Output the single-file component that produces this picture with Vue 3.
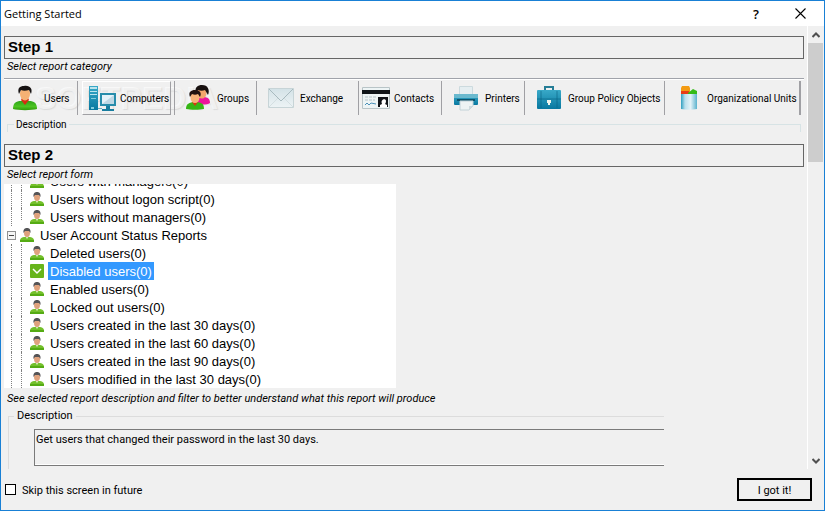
<script setup>
import { ref } from 'vue'

const categories = [
  { name: 'Users', icon: 'user', size: 'w-users' },
  { name: 'Computers', icon: 'computer', size: 'w-computers' },
  { name: 'Groups', icon: 'group', size: 'w-groups' },
  { name: 'Exchange', icon: 'mail', size: 'w-exchange' },
  { name: 'Contacts', icon: 'card', size: 'w-contacts' },
  { name: 'Printers', icon: 'printer', size: 'w-printers' },
  { name: 'Group Policy Objects', icon: 'case', size: 'w-policy' },
  { name: 'Organizational Units', icon: 'folder', size: 'w-units' },
]
const activeCategory = ref('Computers')

const reports = [
  { name: 'Users with managers(0)' },
  { name: 'Users without logon script(0)' },
  { name: 'Users without managers(0)', last: true },
  { name: 'User Account Status Reports', group: true },
  { name: 'Deleted users(0)' },
  { name: 'Disabled users(0)' },
  { name: 'Enabled users(0)' },
  { name: 'Locked out users(0)' },
  { name: 'Users created in the last 30 days(0)' },
  { name: 'Users created in the last 60 days(0)' },
  { name: 'Users created in the last 90 days(0)' },
  { name: 'Users modified in the last 30 days(0)' },
]
const selected = ref('Disabled users(0)')
const skip = ref(false)
</script>

<template>
  <div class="window">
    <svg class="defs" width="0" height="0" aria-hidden="true">
      <defs>
        <linearGradient id="green" x1="0" y1="0" x2="0" y2="1"><stop offset="0" stop-color="#2fa51a" /><stop offset=".6" stop-color="#4cc422" /><stop offset="1" stop-color="#2f9a08" /></linearGradient>
        <linearGradient id="teal" x1="0" y1="0" x2="0" y2="1"><stop offset="0" stop-color="#39a9c8" /><stop offset="1" stop-color="#0878a0" /></linearGradient>
        <linearGradient id="glass" x1="0" y1="0" x2="1" y2="0"><stop offset="0" stop-color="#2e9fc0" /><stop offset=".25" stop-color="#b9dfec" /><stop offset=".6" stop-color="#e4f3f8" /><stop offset="1" stop-color="#5bb2cd" /></linearGradient>
        <linearGradient id="paper" x1="0" y1="0" x2="0" y2="1"><stop offset="0" stop-color="#d3e2e7" /><stop offset="1" stop-color="#edf3f5" /></linearGradient>
      </defs>
    </svg>
    <header class="titlebar">
      <h1>Getting Started</h1>
      <button class="help" aria-label="Help">?</button>
      <button class="close" aria-label="Close">
        <svg width="11" height="11" viewBox="0 0 11 11"><path d="M.5 .5l10 10M10.5 .5l-10 10" stroke="#000" stroke-width="1.1" /></svg>
      </button>
    </header>

    <div class="body">
      <main class="content">
        <h2>Step 1</h2>
        <p class="hint">Select report category</p>
        <div class="toolbar">
          <span class="watermark" aria-hidden="true">SOFTPEDIA</span>
          <button
            v-for="c in categories"
            :key="c.name"
            class="category"
            :class="[c.size, { active: activeCategory === c.name }]"
            @click="activeCategory = c.name"
          >
            <svg v-if="c.icon === 'user'" width="26" height="26" viewBox="0 0 26 26">
              <path d="M1 24c0-6 3-8 8-8h8c5 0 8 2 8 8-5 1.500-19 1.500-24 0z" fill="url(#green)" />
              <path d="M9 15l4 5 4-5-1-2h-6z" fill="#d52d12" />
              <ellipse cx="13" cy="9" rx="5" ry="6.500" fill="#f5b174" />
              <path d="M7 9C5 3 8 1 12 1c6-1 9 3 7 8l-2-4c-3 1-6 1-8 0z" fill="#171313" />
            </svg>
            <svg v-else-if="c.icon === 'computer'" width="28" height="27" viewBox="0 0 28 27">
              <path d="M1 1h9v24H1z" fill="url(#teal)" /><path d="M2 2h7v2H2zm0 4h7v1H2zm0 3h7v1H2z" fill="#bce4ed" />
              <path d="M3 13h5v1H3zm0 9h3v2H3z" fill="#83cddd" />
              <path d="M12 8h16v13H12z" fill="#278cab" /><path d="M14 10h12v9H14z" fill="#e4f2f9" /><path d="M14 19l12-9v9z" fill="#bed7e4" />
              <path d="M18 21h4v3h4v2H14v-2h4z" fill="#187d9f" /><path d="M10 23h4v1h-4z" fill="#63aec3" />
            </svg>
            <svg v-else-if="c.icon === 'group'" width="26" height="26" viewBox="0 0 26 26">
              <path d="M11 18c0-4 3-6 7-6 5 0 7 2 7 6-3 2-11 2-14 0z" fill="#ed169c" />
              <ellipse cx="17" cy="8" rx="4.500" ry="5.500" fill="#f3a66c" /><path d="M11 9C9 2 13 0 17 0c6 0 8 5 6 10l-3-5c-2 1-5 1-7 0z" fill="#17100f" />
              <path d="M1 24c0-5 3-7 9-7 7 0 9 2 9 7-5 1-13 1-18 0z" fill="#37b615" /><path d="M7 17l3 4 3-4z" fill="#d63814" />
              <ellipse cx="10" cy="12.500" rx="4.500" ry="5.500" fill="#f7b57a" /><path d="M5 12C3 7 6 5 10 5c5 0 7 3 5 7l-2-3c-2 1-4 1-6 0z" fill="#211411" />
            </svg>
            <svg v-else-if="c.icon === 'mail'" width="26" height="20" viewBox="0 0 26 20">
              <path d="M.5 .5h25v19H.5z" fill="url(#paper)" stroke="#c7d4d7" /><path d="M1 1l12 12L25 1" fill="none" stroke="#a8babf" /><path d="M1 19l9-9M25 19l-9-9" stroke="#d4dfe2" />
            </svg>
            <svg v-else-if="c.icon === 'card'" width="28" height="22" viewBox="0 0 28 22">
              <path d="M.5 .5h27v21H.5z" fill="#edf4f5" stroke="#b8c4c7" /><path d="M0 3h28v4H0z" fill="#101519" /><path d="M3 10h11M3 13h10" stroke="#b5c3c8" stroke-dasharray="3 1" /><path d="M3 18l2-2 2 2 2-2 5 1" fill="none" stroke="#4a91b9" />
              <path d="M16 10h10v10H16z" fill="#101419" /><path d="M18 20v-2l2-1c-2-5 4-6 4-3 0 2-1 3-1 3l2 1v2z" fill="#fff" />
            </svg>
            <svg v-else-if="c.icon === 'printer'" width="26" height="26" viewBox="0 0 26 26">
              <path d="M6.500 1.500h13v10h-13z" fill="#e5eef1" stroke="#ccdade" /><rect x="1" y="9" width="24" height="11" rx="1" fill="url(#teal)" /><path d="M1 9h24v4H1z" fill="#6ab9ce" /><path d="M4 14h18v2H4z" fill="#0c536c" /><path d="M7 16h13v5l-4 4H7z" fill="#edf3f4" stroke="#c2d2d7" /><path d="M16 25v-4h4" fill="#cfdbdf" />
            </svg>
            <svg v-else-if="c.icon === 'case'" width="26" height="24" viewBox="0 0 26 24">
              <path d="M9 5V1h8v4" fill="none" stroke="#257d96" stroke-width="2" /><rect x="1" y="4" width="24" height="19" rx="1" fill="url(#teal)" /><path d="M1 13h24M5 5v17M21 5v17" stroke="#086383" stroke-opacity=".6" /><path d="M11 14h4v3h-1v2h-2v-2h-1z" fill="#eef5ed" />
            </svg>
            <svg v-else width="18" height="26" viewBox="0 0 18 26">
              <path d="M1 3l1-2h7l1 2v6H1z" fill="#f39b13" /><path d="M1 6h8v3H1z" fill="#e83b16" /><path d="M8 8l5-4 4 2v4H8z" fill="#35bb17" /><path d="M1 9h16v15c-5 1-11 1-16 0z" fill="url(#glass)" />
            </svg>
            <span class="label">{{ c.name }}</span>
          </button>
        </div>
        <fieldset class="category-description"><legend>Description</legend></fieldset>

        <h2>Step 2</h2>
        <p class="hint">Select report form</p>
        <ul class="tree">
          <li v-for="r in reports" :key="r.name" :class="{ group: r.group, last: r.last }">
            <button v-if="r.group" class="toggle" aria-label="Collapse"></button>
            <svg v-if="selected === r.name" class="node" width="14" height="14" viewBox="0 0 14 14">
              <rect width="14" height="14" rx="1" fill="#67b51c" /><path d="M3 5l4 4 4-4" fill="none" stroke="#fff" stroke-width="1.500" />
            </svg>
            <svg v-else class="node" width="14" height="14" viewBox="0 0 14 14">
              <path d="M0 13c0-3 2-4 5-4h4c3 0 5 1 5 4z" fill="#74c02b" /><path d="M0 12h14v2H0z" fill="#55ab14" /><path d="M5 8l2 3 2-3z" fill="#d8eabf" />
              <ellipse cx="7" cy="5" rx="3" ry="4" fill="#dfa27d" /><path d="M3.500 5C3 1 5 0 7 0s4 1 3.500 5L9 3H5z" fill="#555456" />
            </svg>
            <button class="report" :class="{ selected: selected === r.name }" @click="selected = r.name">{{ r.name }}</button>
          </li>
        </ul>
        <p class="hint explain">See selected report description and filter to better understand what this report will produce</p>
        <fieldset class="report-description">
          <legend>Description</legend>
          <div class="readout">Get users that changed their password in the last 30 days.</div>
        </fieldset>
      </main>
      <div class="scrollbar">
        <button aria-label="Scroll up"><svg width="8" height="6" viewBox="0 0 8 6"><path d="M.5 5L4 1.500 7.500 5" fill="none" stroke="#505050" stroke-width="2" /></svg></button>
        <div class="thumb"></div>
        <button class="down" aria-label="Scroll down"><svg width="8" height="6" viewBox="0 0 8 6"><path d="M.5 1L4 4.500 7.500 1" fill="none" stroke="#505050" stroke-width="2" /></svg></button>
      </div>
    </div>

    <footer>
      <label><input v-model="skip" type="checkbox" /><span class="label">Skip this screen in future</span></label>
      <button class="confirm"><span class="label">I got it!</span></button>
    </footer>
  </div>
</template>

<style>
body { margin: 0; background: #f0f0f0; }
</style>

<style scoped>
*, *::before { box-sizing: border-box; }
.window { display: flex; flex-direction: column; height: 100vh; border: 1px solid #1980d5; background: #f0f0f0; color: #000; font: 11px/14px Roboto, "Liberation Sans", sans-serif; overflow: hidden; }
.defs { position: absolute; }
button { font: inherit; color: inherit; border: 0; padding: 0; background: none; }
h1, h2, p, ul { margin: 0; padding: 0; }
svg { flex: none; }
.label { display: block; padding-top: 2px; }
.titlebar { display: flex; align-items: center; flex: none; height: 25px; padding: 0 18px 0 3px; background: #fff; }
h1 { flex: 1; font: 11px/24px "Open Sans", "Noto Sans", sans-serif; }
.help { width: 16px; margin-right: 31px; font: 600 13px/24px "Open Sans", sans-serif; }
.close { display: flex; }
.body { display: flex; flex: 1; min-height: 0; }
.content { flex: 1; min-width: 0; padding: 10px 3px 0 3px; overflow: hidden; }
h2 { height: 23px; padding-left: 3px; border: 1px solid #666; font: bold 15px/19px "Liberation Sans", Arial, sans-serif; }
.hint { height: 17px; padding-left: 3px; font-style: italic; line-height: 15px; }
.toolbar { position: relative; display: grid; grid-template-columns: 72fr 96fr 83fr 102fr 83fr 83fr 140fr 136fr; height: 39px; margin-top: 2px; padding: 2px 3px 2px 2px; border-top: 1px solid #a0a3aa; box-shadow: inset 0 1px #fff; font-size: 10px; }
.category { position: relative; display: flex; align-items: center; gap: 6px; min-width: 0; height: 34px; padding-left: 11px; border-right: 1px solid #a0a0a4; white-space: nowrap; }
.category.active { margin: 0 3px 0 4px; border: 1px solid #fff; border-right-color: #a0a0a4; border-bottom-color: #a0a0a4; }
.w-users { padding-left: 6px; }
.w-computers { gap: 4px; padding-left: 5px; }
.w-groups { padding-left: 10px; border-left: 1px solid #a0a0a4; }
.w-contacts { gap: 4px; padding-left: 3px; }
.w-units { gap: 9px; padding-left: 15px; border-right-width: 2px; }
.watermark { position: absolute; left: 31px; top: 4px; font: bold 32px/30px "Liberation Sans", Arial, sans-serif; color: rgba(255, 255, 255, .6); text-shadow: 1px 1px 1px rgba(160, 160, 160, .25); pointer-events: none; }
fieldset { margin: 0; border: 1px solid #dcdcdc; min-width: 0; }
legend { padding: 0 2px; }
.category-description { height: 14px; margin: 1px 3px 12px; padding: 0 6px; border-color: #d7e3e5; border-bottom: 0; font-size: 10px; line-height: 13px; }
.tree { width: 392px; max-width: 100%; height: 204px; display: flex; flex-direction: column; justify-content: flex-end; overflow: hidden; background: #fff; list-style: none; }
.tree li { display: flex; align-items: center; flex: none; height: 18px; margin-left: 7px; padding-left: 9px; border-left: 1px dotted #808080; }
.tree li::before { content: ""; width: 1px; height: 18px; margin-right: 8px; border-left: 1px dotted #808080; }
.tree li.last::before { height: 12px; margin-bottom: 6px; }
.tree li.group { margin-left: 3px; padding-left: 0; border-left: 0; }
.tree li.group::before { display: none; }
.toggle { width: 9px; height: 9px; margin-right: 4px; border: 1px solid #919191; background: linear-gradient(#444, #444) center / 5px 1px no-repeat #f5f5f5; }
.report { height: 18px; margin-left: 4px; padding: 1px 2px 0; font: 13px/17px "Liberation Sans", Arial, sans-serif; white-space: nowrap; }
.report.selected { background: #3399ff; color: #fff; }
.explain { height: 20px; padding-top: 3px; }
.report-description { width: 656px; max-width: 100%; height: 80px; padding: 7px 0 0 25px; border-right: 0; margin-left: 4px; }
.report-description legend { margin-left: -20px; padding: 0 3px; line-height: 16px; }
.readout { height: 37px; margin-top: -2px; padding: 3px 1px; border: 1px solid #7a7a7a; border-right: 0; box-shadow: inset 0 -1px #fff; }
.scrollbar { display: flex; flex-direction: column; align-items: stretch; flex: none; width: 17px; border-left: 1px solid #fff; }
.scrollbar button { display: flex; align-items: center; justify-content: center; height: 17px; }
.thumb { height: 119px; margin-right: 1px; background: #cdcdcd; }
.scrollbar .down { margin-top: auto; }
footer { display: flex; align-items: center; justify-content: space-between; flex: none; height: 41px; padding: 0 12px 0 4px; }
label { display: flex; align-items: center; gap: 6px; }
input { appearance: none; width: 11px; height: 11px; margin: 0; border: 1px solid #000; background: #fff; }
input:checked { background: #000; }
.confirm { width: 75px; height: 23px; border: 2px solid #000; }
</style>
